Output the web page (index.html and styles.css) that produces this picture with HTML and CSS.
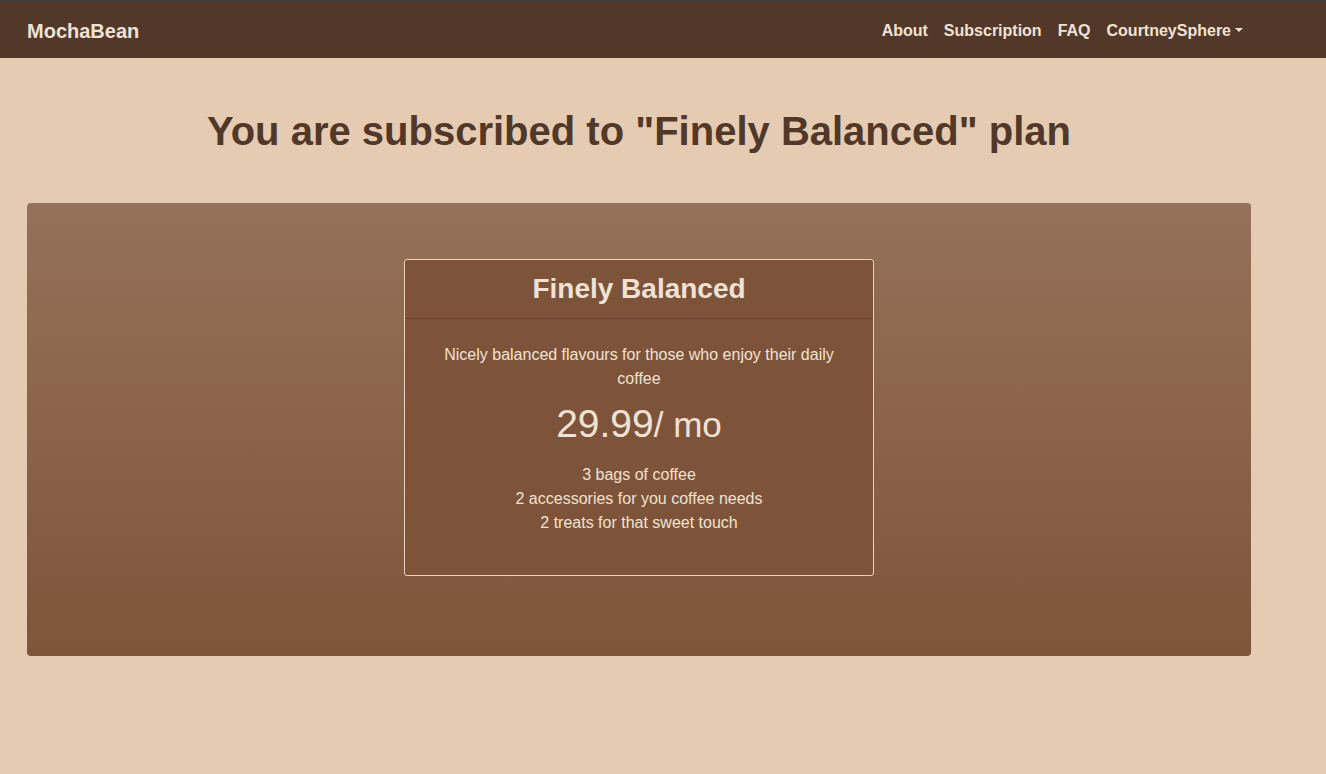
FILE: index.html
```html
<!DOCTYPE html>
<html lang="en">
<head>
<meta charset="utf-8">
<title>MochaBean - Subscription</title>
<link rel="stylesheet" href="styles.css">
</head>
<body>
<nav class="navbar">
  <div class="container nav-inner">
    <a class="brand" href="#">MochaBean</a>
    <ul class="nav-links">
      <li><a class="nav-link" href="#">About</a></li>
      <li><a class="nav-link" href="#">Subscription</a></li>
      <li><a class="nav-link" href="#">FAQ</a></li>
      <li><a class="nav-link dropdown-toggle" href="#">CourtneySphere</a></li>
    </ul>
  </div>
</nav>
<main class="container">
  <h1 class="page-title">You are subscribed to "Finely Balanced" plan</h1>
  <section class="jumbotron">
    <div class="card">
      <div class="card-header">
        <h2 class="card-title">Finely Balanced</h2>
      </div>
      <div class="card-body">
        <p class="card-desc">Nicely balanced flavours for those who enjoy their daily coffee</p>
        <div class="price">29.99<small>/ mo</small></div>
        <ul class="features">
          <li>3 bags of coffee</li>
          <li>2 accessories for you coffee needs</li>
          <li>2 treats for that sweet touch</li>
        </ul>
      </div>
    </div>
  </section>
</main>
</body>
</html>
```

FILE: styles.css
```css
* { box-sizing: border-box; }

html, body {
  margin: 0;
  padding: 0;
}

body {
  background: #e4cbb2;
  font-family: "Liberation Sans", Arial, sans-serif;
  font-size: 16px;
  line-height: 24px;
  color: #523828;
  min-height: 774px;
}

.container {
  width: 1224px;
  margin-left: 27px;
}

.navbar {
  background: #523828;
  border-top: 2px solid #3e3e3e;
  height: 58px;
}

.nav-inner {
  height: 56px;
  padding-top: 2px;
  display: flex;
  align-items: center;
  justify-content: space-between;
}

.brand {
  font-size: 20px;
  font-weight: bold;
  color: #f0e2d4;
  text-decoration: none;
  line-height: 30px;
}

.nav-links {
  list-style: none;
  margin: 0;
  padding: 0;
  display: flex;
}

.nav-link {
  display: block;
  padding: 0 8px;
  font-weight: bold;
  color: #f0e2d4;
  text-decoration: none;
  line-height: 24px;
}

.dropdown-toggle::after {
  content: "";
  display: inline-block;
  margin-left: 4px;
  vertical-align: 4px;
  border-top: 4.8px solid #f0e2d4;
  border-left: 4.8px solid transparent;
  border-right: 4.8px solid transparent;
}

.page-title {
  margin: 49px 0 48px;
  font-size: 40px;
  line-height: 48px;
  font-weight: bold;
  text-align: center;
  color: #523828;
}

.jumbotron {
  background: linear-gradient(to bottom, #957159, #7f5539);
  border-radius: 4px;
  padding: 56px 0 80px;
  display: flex;
  justify-content: center;
}

.card {
  width: 470px;
  background: #7d5439;
  border: 1px solid #e6d2c0;
  border-radius: 3px;
  color: #f0e2d4;
  text-align: center;
}

.card-header {
  padding: 12px 20px;
  border-bottom: 1px solid #66432c;
}

.card-title {
  margin: 0;
  font-size: 28px;
  line-height: 33.6px;
  font-weight: bold;
  color: #f0e2d4;
}

.card-body {
  padding: 24px 24px 23px;
}

.card-desc {
  margin: 0 0 10px;
}

.price {
  font-size: 39px;
  line-height: 46px;
  margin-bottom: 15px;
}

.price small {
  font-size: 35px;
}

.features {
  list-style: none;
  margin: 0 0 17px;
  padding: 0;
}
```
